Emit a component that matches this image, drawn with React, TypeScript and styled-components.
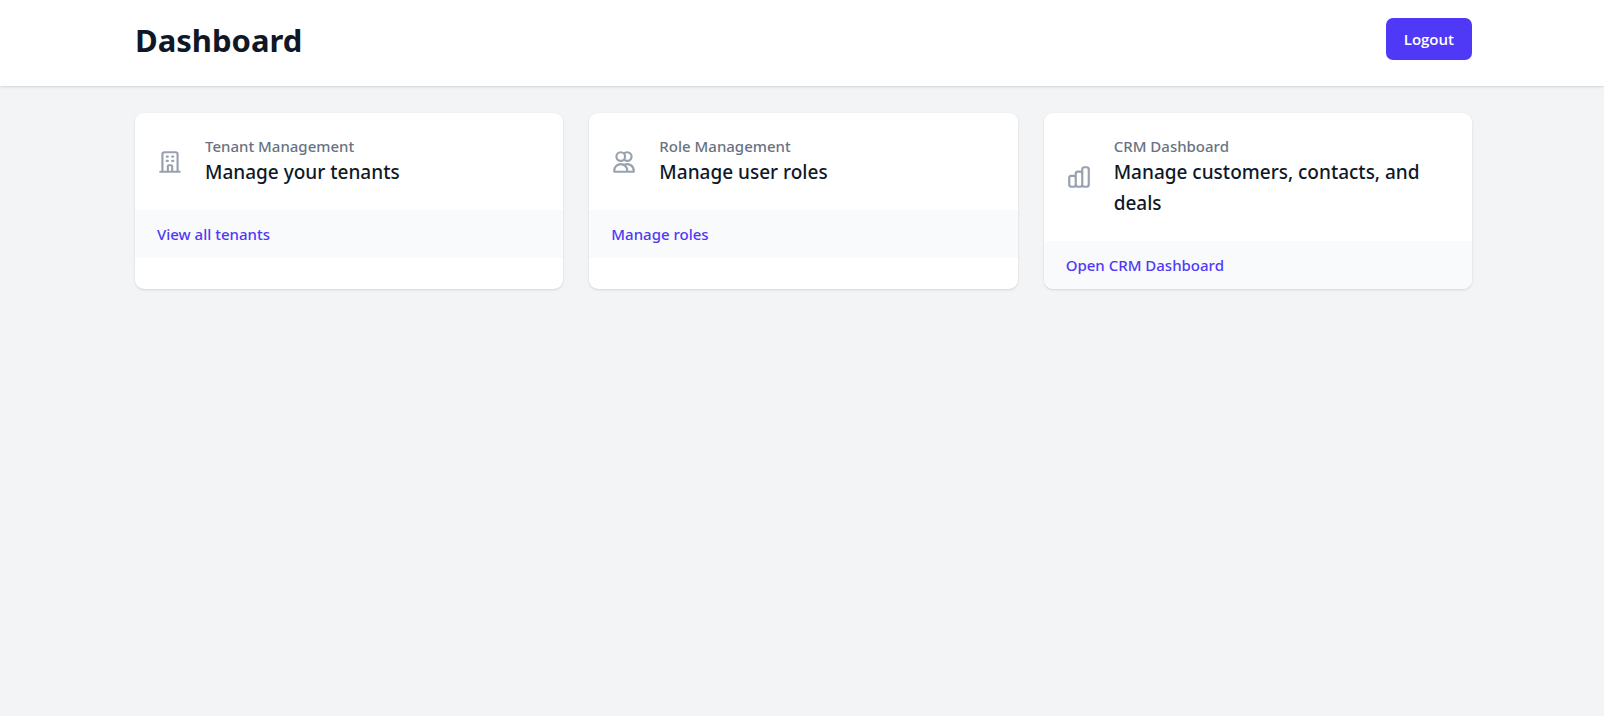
import React from 'react';
import styled, { createGlobalStyle } from 'styled-components';

const GlobalStyle = createGlobalStyle`
  *, *::before, *::after { box-sizing: border-box; }
  body {
    margin: 0;
    background: #f3f4f6;
    color: #101828;
    font-family: 'Segoe UI', 'Noto Sans', 'Open Sans', sans-serif;
  }
  h1, p, dl, dt, dd { margin: 0; }
`;

const Page = styled.div`
  min-height: 100vh;
  background: #f3f4f6;
`;

const Container = styled.div`
  max-width: 1408px;
  margin: 0 auto;
  padding: 0 34px 0 37px;
`;

const Header = styled.header`
  padding: 18px 0 24px;
  background: #fff;
  box-shadow: 0 1px 3px rgba(0, 0, 0, 0.1), 0 1px 2px -1px rgba(0, 0, 0, 0.1);
`;

const HeaderRow = styled(Container)`
  display: flex;
  align-items: flex-start;
  justify-content: space-between;
`;

const Title = styled.h1`
  font-size: 31px;
  line-height: 44px;
  font-weight: 700;
`;

const LogoutButton = styled.button`
  padding: 10px 18px;
  border: 0;
  border-radius: 7px;
  background: #4f39f6;
  color: #fff;
  font-family: 'Segoe UI', 'Open Sans', sans-serif;
  font-size: 15px;
  line-height: 22px;
  font-weight: 600;
  cursor: pointer;

  &:hover { background: #432dd7; }
`;

const Main = styled.main`
  padding: 27px 0;
`;

const CardGrid = styled(Container)`
  display: grid;
  grid-template-columns: repeat(3, minmax(0, 1fr));
  gap: 26px;

  @media (max-width: 900px) {
    grid-template-columns: minmax(0, 1fr);
  }
`;

const Card = styled.section`
  overflow: hidden;
  border-radius: 9px;
  background: #fff;
  box-shadow: 0 1px 3px rgba(0, 0, 0, 0.1), 0 1px 2px -1px rgba(0, 0, 0, 0.1);
`;

const CardBody = styled.div`
  display: flex;
  align-items: center;
  gap: 22px;
  padding: 22px;
`;

const CardIcon = styled.svg`
  flex: none;
  width: 26px;
  height: 26px;
  fill: none;
  stroke: #99a1af;
  stroke-width: 2;
  stroke-linecap: round;
  stroke-linejoin: round;
`;

const CardText = styled.dl`
  flex: 1;
  min-width: 0;
`;

const CardLabel = styled.dt`
  color: #6a7282;
  font-size: 15px;
  line-height: 22px;
  font-weight: 500;
`;

const CardHeading = styled.dd`
  font-size: 19px;
  line-height: 31px;
  font-weight: 500;
`;

const CardFooter = styled.div`
  padding: 13px 22px;
  background: #f9fafb;
  font-size: 15px;
  line-height: 22px;
`;

const CardLink = styled.a`
  color: #4f39f6;
  font-weight: 500;
  text-decoration: none;

  &:hover { color: #432dd7; }
`;

const cards = [
  {
    label: 'Tenant Management',
    heading: 'Manage your tenants',
    link: 'View all tenants',
    href: '#tenants',
    icon: 'M19 21V5a2 2 0 00-2-2H7a2 2 0 00-2 2v16m14 0h2m-2 0h-5m-9 0H3m2 0h5M9 7h1m-1 4h1m4-4h1m-1 4h1m-5 10v-5a1 1 0 011-1h2a1 1 0 011 1v5m-4 0h4',
  },
  {
    label: 'Role Management',
    heading: 'Manage user roles',
    link: 'Manage roles',
    href: '#roles',
    icon: 'M12 4.354a4 4 0 110 5.292M15 21H3v-1a6 6 0 0112 0v1zm0 0h6v-1a6 6 0 00-9-5.197M13 7a4 4 0 11-8 0 4 4 0 018 0z',
  },
  {
    label: 'CRM Dashboard',
    heading: 'Manage customers, contacts, and deals',
    link: 'Open CRM Dashboard',
    href: '#crm',
    icon: 'M9 19v-6a2 2 0 00-2-2H5a2 2 0 00-2 2v6a2 2 0 002 2h2a2 2 0 002-2zm0 0V9a2 2 0 012-2h2a2 2 0 012 2v10m-6 0a2 2 0 002 2h2a2 2 0 002-2m0 0V5a2 2 0 012-2h2a2 2 0 012 2v14a2 2 0 01-2 2h-2a2 2 0 01-2-2z',
  },
];

export default function App() {
  return (
    <Page>
      <GlobalStyle />
      <Header>
        <HeaderRow>
          <Title>Dashboard</Title>
          <LogoutButton type="button">Logout</LogoutButton>
        </HeaderRow>
      </Header>
      <Main>
        <CardGrid>
          {cards.map((card) => (
            <Card key={card.label}>
              <CardBody>
                <CardIcon viewBox="0 0 24 24" aria-hidden="true">
                  <path d={card.icon} />
                </CardIcon>
                <CardText>
                  <CardLabel>{card.label}</CardLabel>
                  <CardHeading>{card.heading}</CardHeading>
                </CardText>
              </CardBody>
              <CardFooter>
                <CardLink href={card.href}>{card.link}</CardLink>
              </CardFooter>
            </Card>
          ))}
        </CardGrid>
      </Main>
    </Page>
  );
}
